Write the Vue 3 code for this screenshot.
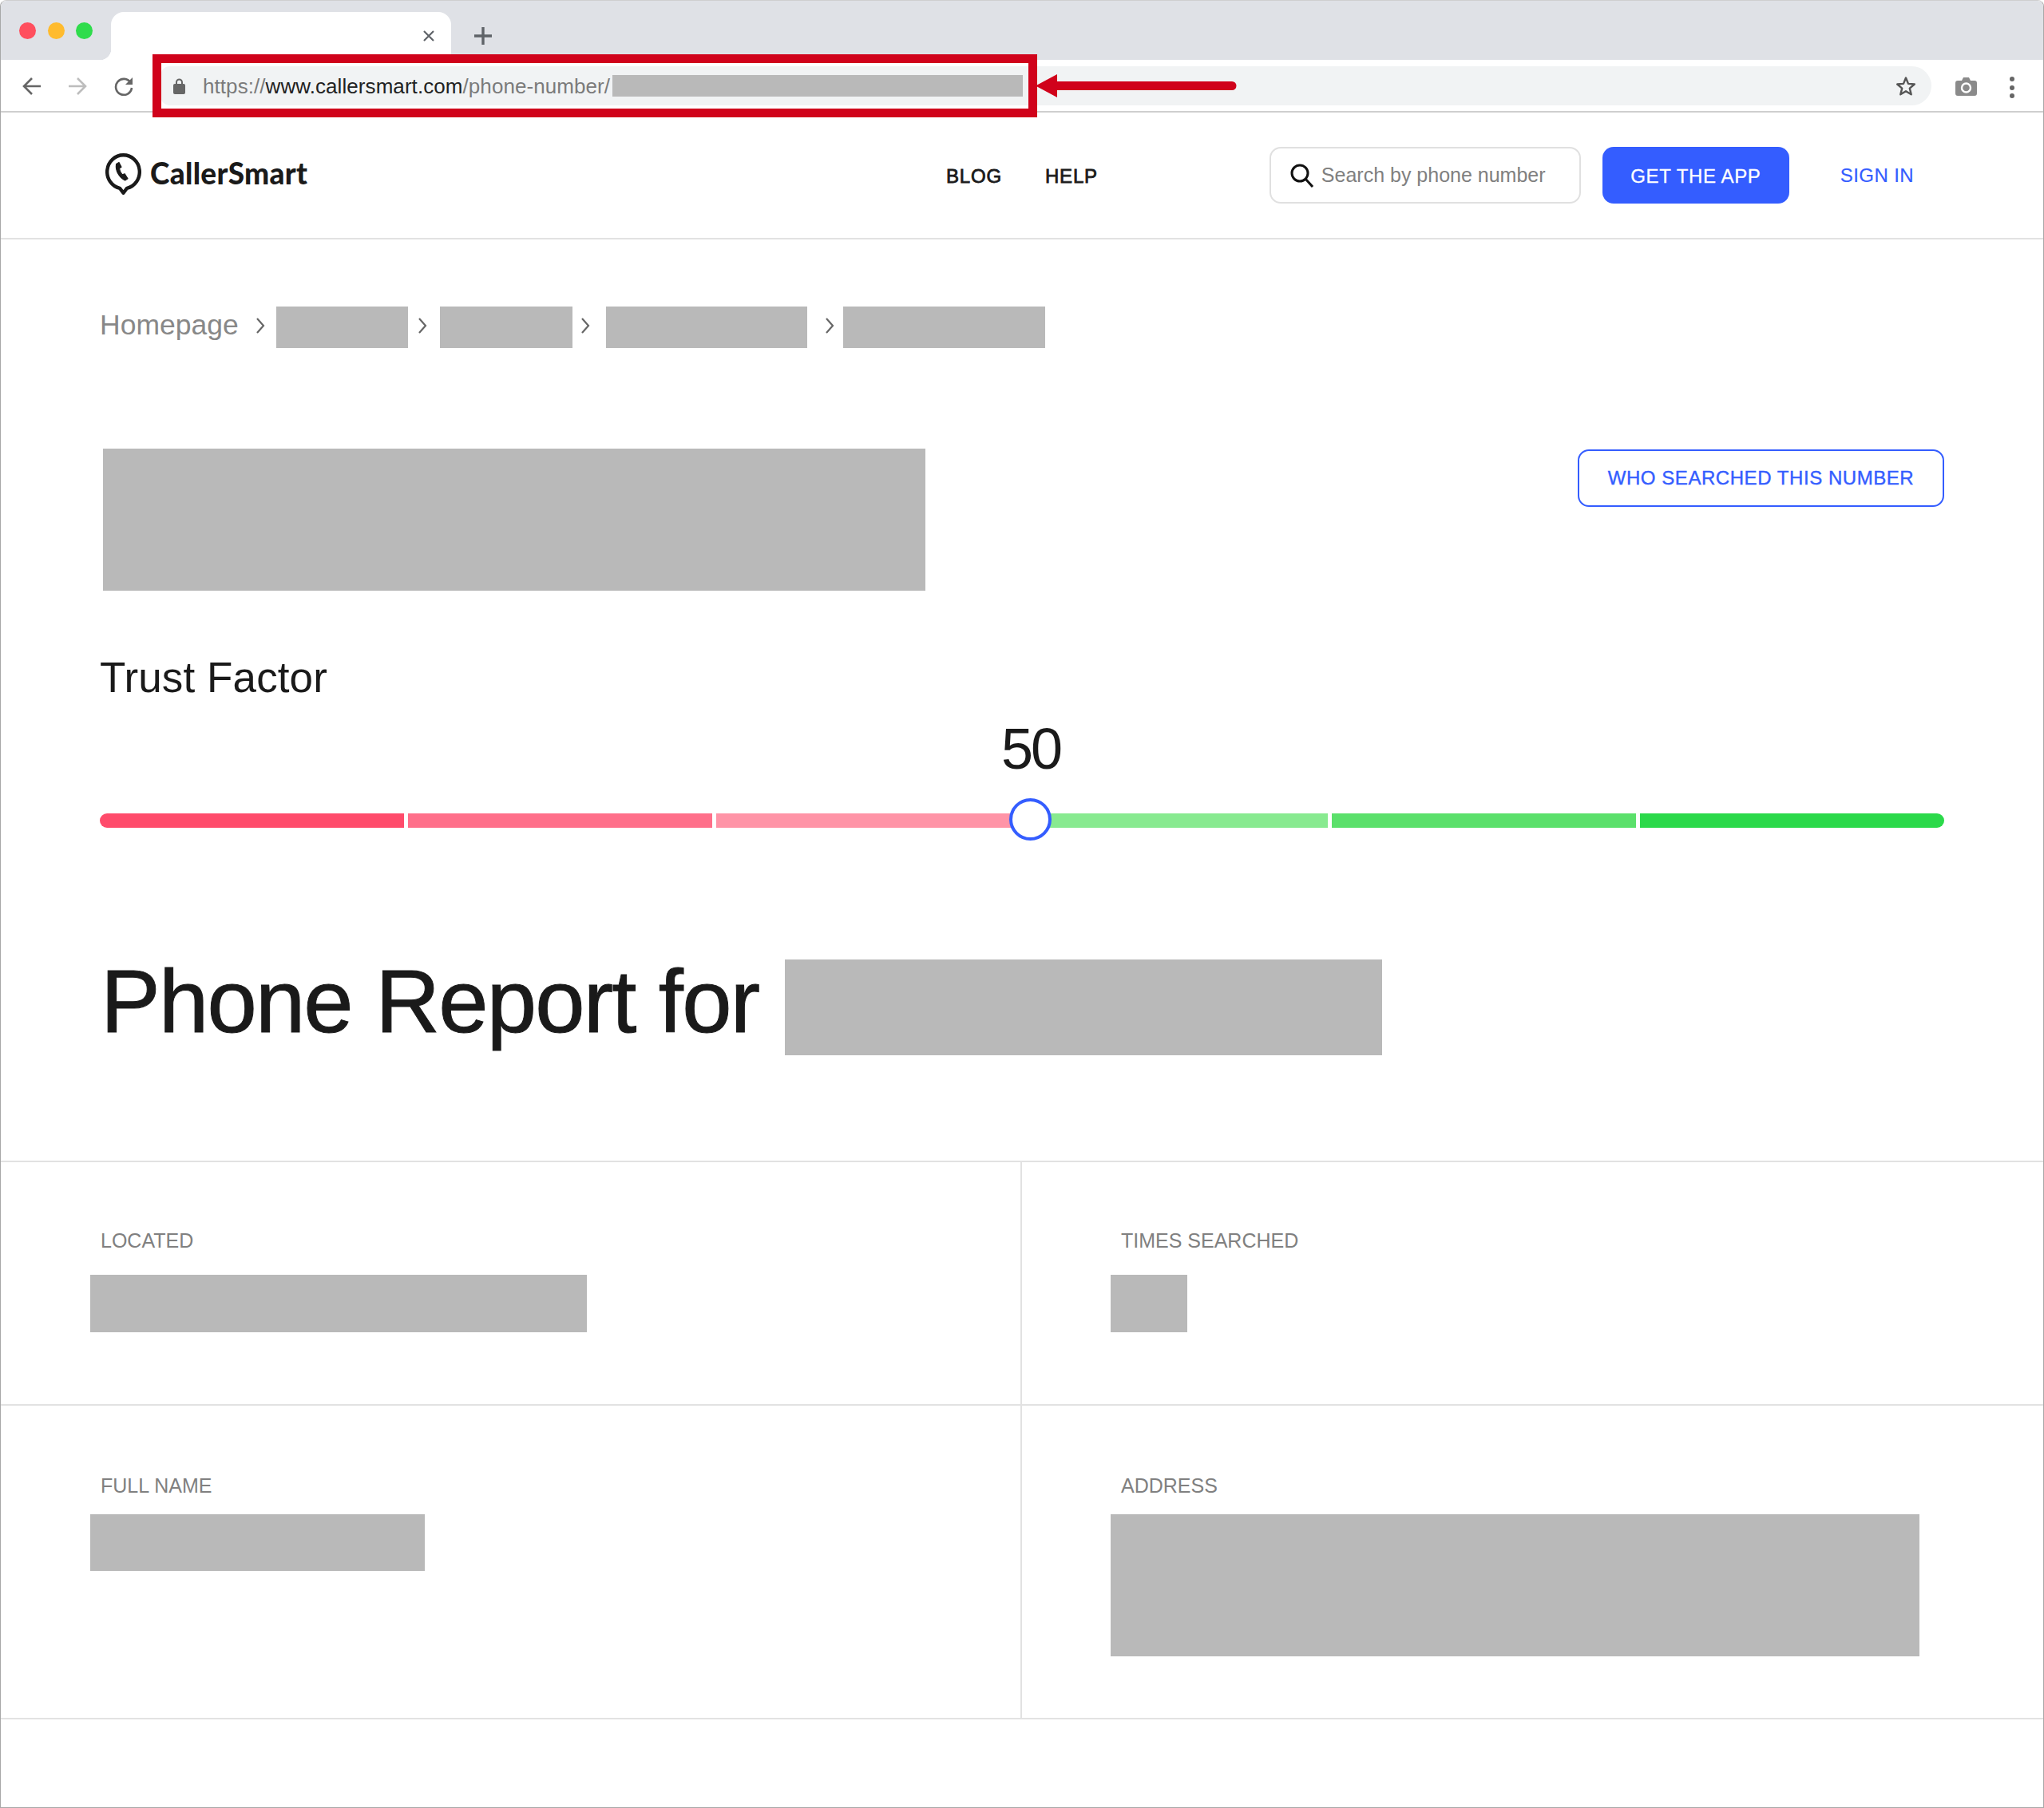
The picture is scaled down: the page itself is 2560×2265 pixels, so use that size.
<script setup>
const crumbs = [
  { pad: 22, width: 165, slot: 48 },
  { pad: 12, width: 166, slot: 40 },
  { pad: 10, width: 252, slot: 42 },
  { pad: 22, width: 253, slot: 45 },
]
const segments = ['#ff4b6b', '#ff6f8a', '#ff94a7', '#88ea90', '#5be06b', '#2bd94a']
</script>

<template>
  <div class="window">
    <div class="tabstrip">
      <div class="lights">
        <span class="light red"></span>
        <span class="light amber"></span>
        <span class="light green"></span>
      </div>
      <div class="tab">
        <svg class="tab-close" width="16" height="16" viewBox="0 0 16 16">
          <path d="M2 2l12 12M14 2L2 14" stroke="#5f6368" stroke-width="2.2" fill="none" />
        </svg>
      </div>
      <svg class="new-tab" width="24" height="24" viewBox="0 0 24 24">
        <path d="M12 1v22M1 12h22" stroke="#5f6368" stroke-width="3.4" fill="none" />
      </svg>
    </div>

    <div class="toolbar">
      <svg width="24" height="24" viewBox="0 0 24 24" fill="none" stroke="#666" stroke-width="2.6">
        <path d="M23 12H3M12 2L2 12l10 10" />
      </svg>
      <svg width="24" height="24" viewBox="0 0 24 24" fill="none" stroke="#bdbdbd" stroke-width="2.6">
        <path d="M1 12h20M12 2l10 10-10 10" />
      </svg>
      <svg width="26" height="24" viewBox="0 0 26 24" fill="none">
        <path d="M21.5 7.5A10 10 0 1 0 23 14" stroke="#666" stroke-width="2.6" />
        <path d="M24 1v9h-9z" fill="#666" />
      </svg>
      <div class="address">
        <svg width="15" height="20" viewBox="0 0 15 20">
          <path d="M4 8V5a3.5 3.5 0 0 1 7 0v3" fill="none" stroke="#666" stroke-width="2" />
          <rect y="7" width="15" height="13" rx="2" fill="#666" />
        </svg>
        <span class="url"><span class="url-dim">https://</span>www.callersmart.com<span class="url-dim">/phone-number/</span></span>
        <span class="url-redact"></span>
        <svg class="star" width="26" height="26" viewBox="0 0 26 26">
          <path d="M13 2.5l3 7.4 7.8.6-6 5.1 1.9 7.7L13 19.2l-6.7 4.1 1.9-7.7-6-5.1 7.8-.6z" fill="none" stroke="#555" stroke-width="2.4" stroke-linejoin="round" />
        </svg>
      </div>
      <svg class="camera" width="27" height="23" viewBox="0 0 27 23">
        <path d="M3 4h5l2-4h7l2 4h5a3 3 0 0 1 3 3v13a3 3 0 0 1-3 3H3a3 3 0 0 1-3-3V7a3 3 0 0 1 3-3z" fill="#8a8a8a" />
        <circle cx="13.5" cy="13" r="5.5" fill="none" stroke="#fff" stroke-width="2.4" />
      </svg>
      <div class="dots"><span></span><span></span><span></span></div>
    </div>

    <header class="site-header">
      <div class="logo">
        <svg width="45" height="52" viewBox="0 0 45 52">
          <path d="M22.5 2.3a20.2 21 0 0 1 4.5 41.5l-4.5 6-4.5-6a20.2 21 0 0 1 4.5-41.5z" fill="none" stroke="#1a1a1a" stroke-width="4.4" stroke-linejoin="round" />
          <path d="M17 11.5l-3.4 2c-1.2 8 3.2 16.6 11 20.4l3.4-2.2-3.8-6-3 1.2c-2-2.4-3.4-5-3.8-8l2.6-1.6z" fill="#1a1a1a" stroke="#1a1a1a" stroke-width="1.2" stroke-linejoin="round" />
        </svg>
        <span class="logo-text">CallerSmart</span>
      </div>
      <nav class="nav">
        <a>BLOG</a>
        <a>HELP</a>
      </nav>
      <div class="search">
        <svg width="30" height="30" viewBox="0 0 30 30" fill="none" stroke="#111" stroke-width="3">
          <circle cx="12" cy="12" r="10" />
          <path d="M19 19l9 10" />
        </svg>
        <span class="search-text">Search by phone number</span>
      </div>
      <button class="get-app">GET THE APP</button>
      <a class="sign-in">SIGN IN</a>
    </header>

    <main class="content">
      <div class="breadcrumb">
        <span class="home">Homepage</span>
        <template v-for="(c, i) in crumbs" :key="i">
          <span class="chev-slot" :style="{ width: c.slot + 'px', paddingLeft: c.pad + 'px' }">
            <svg width="12" height="20" viewBox="0 0 12 20" fill="none" stroke="#666" stroke-width="2.2">
              <path d="M2 1l8 9-8 9" />
            </svg>
          </span>
          <span class="redact crumb-box" :style="{ width: c.width + 'px' }"></span>
        </template>
      </div>

      <div class="hero">
        <div class="redact hero-box"></div>
        <button class="who">WHO SEARCHED THIS NUMBER</button>
      </div>

      <h2 class="trust-title">Trust Factor</h2>
      <div class="score">50</div>
      <div class="meter">
        <span v-for="s in segments" :key="s" class="segment" :style="{ background: s }"></span>
        <span class="thumb"></span>
      </div>

      <div class="report">
        <h1>Phone Report for</h1>
        <div class="redact report-box"></div>
      </div>
    </main>

    <section class="details">
      <div class="cell row-a left">
        <div class="label">LOCATED</div>
        <div class="redact v-located"></div>
      </div>
      <div class="cell row-a right">
        <div class="label">TIMES SEARCHED</div>
        <div class="redact v-times"></div>
      </div>
      <div class="cell row-b left">
        <div class="label">FULL NAME</div>
        <div class="redact v-name"></div>
      </div>
      <div class="cell row-b right">
        <div class="label">ADDRESS</div>
        <div class="redact v-address"></div>
      </div>
    </section>

    <div class="highlight"></div>
    <svg class="pointer" width="252" height="30" viewBox="0 0 252 30">
      <path d="M0 14.5L27 0v9h219a5.5 5.5 0 0 1 0 11H27v9z" fill="#d0021b" />
    </svg>
  </div>
</template>

<style>
html, body { margin: 0; background: #fff; }
</style>

<style scoped>
.window {
  position: relative;
  width: 2560px;
  height: 2265px;
  box-sizing: border-box;
  border: 1px solid #a8a8a8;
  border-top-color: #cfcfcf;
  border-top-left-radius: 8px;
  border-top-right-radius: 8px;
  overflow: hidden;
  background: #fff;
  font-family: "Liberation Sans", Arial, sans-serif;
  color: #1a1a1a;
}
.tabstrip {
  height: 74px;
  background: #dfe1e6;
  display: flex;
  align-items: flex-end;
}
.lights {
  width: 138px;
  height: 74px;
  box-sizing: border-box;
  padding: 27px 0 0 23px;
  display: flex;
  gap: 14.5px;
}
.light { width: 21px; height: 21px; border-radius: 50%; }
.red { background: #ff4f5e; }
.amber { background: #ffbb2e; }
.green { background: #2fdc4c; }
.tab {
  position: relative;
  width: 426px;
  height: 60px;
  background: #fff;
  border-radius: 16px 16px 0 0;
}
.tab::before {
  content: "";
  position: absolute;
  left: -14px;
  bottom: 0;
  width: 14px;
  height: 14px;
  background: radial-gradient(circle at 0 0, transparent 14px, #fff 14.5px);
}
.tab-close { position: absolute; left: 390px; top: 22px; }
.new-tab { margin: 0 0 18px 28px; }
.toolbar {
  height: 66px;
  box-sizing: border-box;
  border-bottom: 2px solid #cfcfcf;
  padding: 8px 0 0 27px;
  display: flex;
  align-items: flex-start;
  gap: 33px;
}
.toolbar > svg { margin-top: 13px; }
.address {
  width: 2218px;
  height: 49px;
  box-sizing: border-box;
  background: #f1f3f4;
  border-radius: 12px 25px 25px 12px;
  padding: 0 19px 0 16px;
  display: flex;
  align-items: center;
}
.url { margin-left: 22px; font-size: 26px; letter-spacing: 0.07px; color: #222; white-space: nowrap; padding-top: 1px; }
.url-dim { color: #7b7b7b; }
.url-redact { width: 514px; height: 27px; margin-left: 3px; background: #b9b9b9; }
.star { margin-left: auto; }
.toolbar > .camera { margin: 14px 0 0 -3px; }
.dots {
  margin: 13px 0 0 8px;
  display: flex;
  flex-direction: column;
  gap: 4.5px;
}
.dots span { width: 6px; height: 6px; border-radius: 50%; background: #666; }

.site-header {
  height: 159px;
  box-sizing: border-box;
  border-bottom: 2px solid #e2e2e2;
  padding: 0 162px 0 131px;
  display: flex;
  align-items: center;
}
.logo { display: flex; align-items: center; gap: 11px; margin-top: -4px; }
.logo-text {
  font-family: Lato, "Open Sans", sans-serif;
  font-weight: 900;
  font-size: 37px;
  letter-spacing: 0.3px;
  color: #1a1a1a;
  margin-top: -3px;
}
.nav {
  margin-left: auto;
  display: flex;
  gap: 54px;
  font-size: 24px;
  letter-spacing: 0.8px;
  -webkit-text-stroke: 0.8px #1a1a1a;
  margin-top: 3px;
  padding-right: 1px;
}
.search {
  width: 390px;
  height: 71px;
  margin-left: 214px;
  box-sizing: border-box;
  border: 2px solid #e0e0e0;
  border-radius: 14px;
  padding: 0 0 0 24px;
  display: flex;
  align-items: center;
  gap: 9px;
}
.search-text { font-size: 25px; color: #808080; white-space: nowrap; }
.get-app {
  width: 234px;
  height: 71px;
  margin-left: 27px;
  border: 0;
  border-radius: 14px;
  padding: 2px 0 0;
  background: #345dff;
  color: #fff;
  font: 400 24px "Liberation Sans", Arial, sans-serif;
  letter-spacing: 0.6px;
  -webkit-text-stroke: 0.3px #fff;
}
.sign-in {
  margin-left: 64px;
  margin-top: 1px;
  font-size: 24px;
  color: #345dff;
  letter-spacing: 0.4px;
  -webkit-text-stroke: 0.2px #345dff;
}

.content { padding: 84px 124px 0 124px; }
.breadcrumb { display: flex; align-items: center; height: 52px; }
.home { font-size: 35.5px; color: #888; width: 173px; margin-top: -6px; }
.chev-slot { display: flex; justify-content: flex-start; box-sizing: border-box; margin-top: -4px; }
.redact { background: #b9b9b9; }
.crumb-box { height: 52px; }

.hero {
  margin-top: 126px;
  padding-left: 4px;
  display: flex;
  align-items: flex-start;
  justify-content: space-between;
}
.hero-box { width: 1030px; height: 178px; }
.who {
  width: 459px;
  height: 72px;
  margin-top: 1px;
  box-sizing: border-box;
  border: 2px solid #345dff;
  border-radius: 14px;
  background: #fff;
  color: #345dff;
  font: 400 24px "Liberation Sans", Arial, sans-serif;
  letter-spacing: 0.55px;
  -webkit-text-stroke: 0.4px #345dff;
}
.trust-title {
  margin: 79px 0 0;
  font-size: 53px;
  line-height: 60px;
  font-weight: 400;
  letter-spacing: 0.1px;
}
.score {
  margin-top: 19px;
  font-size: 72px;
  line-height: 80px;
  text-align: center;
  padding-left: 22px;
  letter-spacing: -3px;
}
.meter {
  position: relative;
  margin-top: 41px;
  height: 18px;
  display: flex;
  gap: 5px;
}
.segment { flex: 1; }
.segment:first-child { border-radius: 9px 0 0 9px; }
.segment:nth-child(6) { border-radius: 0 9px 9px 0; }
.thumb {
  position: absolute;
  left: 1139px;
  top: -19px;
  width: 53px;
  height: 53px;
  box-sizing: border-box;
  border: 4px solid #345dff;
  border-radius: 50%;
  background: #fff;
}
.report {
  margin-top: 165px;
  padding-left: 1px;
  display: flex;
  align-items: flex-start;
  gap: 33px;
}
.report h1 {
  margin: -7px 0 0;
  font-size: 112px;
  line-height: 120px;
  font-weight: 400;
  letter-spacing: -1.8px;
  -webkit-text-stroke: 1px #1a1a1a;
  white-space: nowrap;
}
.report-box { width: 748px; height: 120px; }

.details {
  margin-top: 132px;
  border-top: 2px solid #e2e2e2;
  border-bottom: 2px solid #e2e2e2;
  display: grid;
  grid-template-columns: 1279px 1fr;
  grid-template-rows: 305px 391px;
}
.cell { box-sizing: border-box; }
.cell.left { border-right: 2px solid #e2e2e2; padding-left: 125px; }
.cell.right { padding-left: 124px; }
.row-a { border-bottom: 2px solid #e2e2e2; padding-top: 84px; }
.row-b { padding-top: 86px; }
.label { font-size: 25px; line-height: 28px; color: #808080; }
.cell .redact { margin-left: -13px; }
.row-a .redact { margin-top: 29px; height: 72px; }
.row-b .redact { margin-top: 22px; height: 71px; }
.v-located { width: 622px; }
.v-times { width: 96px; }
.v-name { width: 419px; }
.row-b .v-address { width: 1013px; height: 178px; }

.highlight {
  position: absolute;
  left: 190px;
  top: 67px;
  width: 1108px;
  height: 79px;
  box-sizing: border-box;
  border: 11px solid #d0021b;
}
.pointer { position: absolute; left: 1296px; top: 92px; }
</style>
